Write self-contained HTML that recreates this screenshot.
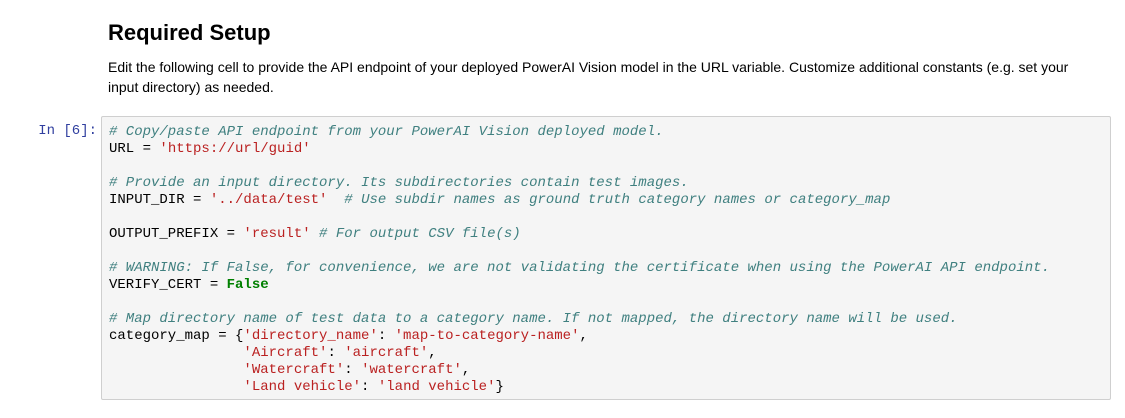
<!DOCTYPE html>
<html><head><meta charset="utf-8"><style>
body{margin:0;background:#fff;width:1125px;height:418px;overflow:hidden;font-family:"Liberation Sans",sans-serif;color:#000;position:relative}
h2{position:absolute;left:108px;top:19px;margin:0;font-size:22px;font-weight:bold;line-height:28px}
p{position:absolute;left:108px;top:57px;margin:0;font-size:14px;line-height:20px;width:990px}
.prompt{position:absolute;left:30px;top:123px;width:67px;text-align:right;font-family:"Liberation Mono",monospace;font-size:14px;line-height:17px;color:#303f9f}
.cell{position:absolute;left:101px;top:116px;width:1008px;height:282px;background:#f5f5f5;border:1px solid #cfcfcf;border-radius:2px}
pre{margin:0;position:absolute;left:7px;top:7px;font-family:"Liberation Mono",monospace;font-size:14px;line-height:17px;color:#000}
.c{color:#408080;font-style:italic}.s{color:#ba2121}.k{color:#008000;font-weight:bold}
</style></head><body>
<h2>Required Setup</h2>
<p>Edit the following cell to provide the API endpoint of your deployed PowerAI Vision model in the URL variable. Customize additional constants (e.g. set your input directory) as needed.</p>
<div class="prompt">In [6]:</div>
<div class="cell"><pre><span class="c"># Copy/paste API endpoint from your PowerAI Vision deployed model.</span>
URL = <span class="s">'https://url/guid'</span>

<span class="c"># Provide an input directory. Its subdirectories contain test images.</span>
INPUT_DIR = <span class="s">'../data/test'</span>  <span class="c"># Use subdir names as ground truth category names or category_map</span>

OUTPUT_PREFIX = <span class="s">'result'</span> <span class="c"># For output CSV file(s)</span>

<span class="c"># WARNING: If False, for convenience, we are not validating the certificate when using the PowerAI API endpoint.</span>
VERIFY_CERT = <span class="k">False</span>

<span class="c"># Map directory name of test data to a category name. If not mapped, the directory name will be used.</span>
category_map = {<span class="s">'directory_name'</span>: <span class="s">'map-to-category-name'</span>,
                <span class="s">'Aircraft'</span>: <span class="s">'aircraft'</span>,
                <span class="s">'Watercraft'</span>: <span class="s">'watercraft'</span>,
                <span class="s">'Land vehicle'</span>: <span class="s">'land vehicle'</span>}</pre></div>
</body></html>
